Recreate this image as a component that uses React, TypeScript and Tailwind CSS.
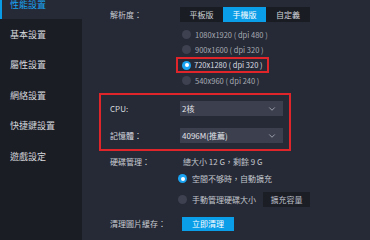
import { ChevronDown } from 'lucide-react'

const NAV = ['性能設置', '基本設置', '屬性設置', '網絡設置', '快捷鍵設置', '遊戲設定']

const RESOLUTIONS = [
  '1080x1920 ( dpi 480 )',
  '900x1600 ( dpi 320 )',
  '720x1280 ( dpi 320 )',
  '540x960 ( dpi 240 )',
]

function Radio({ on }: { on?: boolean }) {
  return on ? (
    <span className="w-[9px] h-[9px] rounded-full bg-[#1aa3f0] flex items-center justify-center shrink-0">
      <span className="w-[4px] h-[4px] rounded-full bg-white" />
    </span>
  ) : (
    <span className="w-[9px] h-[9px] rounded-full bg-[#3d4150] shrink-0" />
  )
}

function Select({ value }: { value: string }) {
  return (
    <div className="w-[103px] h-[15px] bg-[#3b3f4e] flex items-center justify-between pl-[2px] pr-[6px] text-[#e3e5ea]">
      <span>{value}</span>
      <ChevronDown size={10} strokeWidth={2} className="text-[#aeb2bc]" />
    </div>
  )
}

export default function App() {
  return (
    <div
      className="w-[370px] h-[240px] flex bg-[#262a36] text-[8px] text-[#c9ccd3] overflow-hidden"
      style={{ fontFamily: '"Noto Sans CJK TC", "Noto Sans", sans-serif' }}
    >
      <div className="w-[82px] bg-[#1b1d25] flex flex-col">
        {NAV.map((n, i) =>
          i === 0 ? (
            <div key={n} className="h-[19px] shrink-0 bg-[#262a36] border-l-2 border-[#0a9be6] pl-[8px] flex items-start text-[#1aa3f0] text-[9px]">
              <span className="leading-[10px]">{n}</span>
            </div>
          ) : (
            <div key={n} className="h-[30.5px] shrink-0 pl-[10px] flex items-center text-[9px] text-[#d7d9de]">
              {n}
            </div>
          ),
        )}
      </div>

      <div className="flex-1 pl-[28px] pt-[7px]">
        <div className="flex items-center">
          <span className="w-[70px]">解析度：</span>
          <div className="flex h-[15px]">
            <span className="w-[43px] bg-[#1a1c23] flex items-center justify-center text-[#d0d3d9]">平板版</span>
            <span className="w-[43px] bg-[#0a9de8] flex items-center justify-center text-white">手機版</span>
            <span className="w-[44px] bg-[#1a1c23] flex items-center justify-center text-[#d0d3d9]">自定義</span>
          </div>
        </div>

        <div className="ml-[67px] mt-[5px] flex flex-col items-start text-[7.5px]">
          {RESOLUTIONS.map((r, i) => (
            <div
              key={r}
              className={
                i === 2
                  ? 'h-[16px] -ml-[1px] pl-[4px] pr-[4px] flex items-center gap-[3px] border-2 border-[#e0252a] text-[#d9dce2] whitespace-nowrap'
                  : 'h-[15px] pl-[5px] flex items-center gap-[4px] text-[#a6aab4] whitespace-nowrap'
              }
            >
              <Radio on={i === 2} />
              <span>{r}</span>
            </div>
          ))}
        </div>

        <div className="-ml-[11px] mt-[5px] w-[192px] h-[58px] border-2 border-[#e0252a] pl-[9px] pt-[6px] flex flex-col gap-[12px]">
          <div className="flex items-center">
            <span className="w-[70px] text-[#d6d9df]">CPU:</span>
            <Select value="2核" />
          </div>
          <div className="flex items-center">
            <span className="w-[70px] text-[#d6d9df]">記憶體：</span>
            <Select value="4096M(推薦)" />
          </div>
        </div>

        <div className="flex items-center h-[15px] mt-[3px]">
          <span className="w-[73px]">硬碟管理：</span>
          <span className="text-[#c2c6cd]">總大小 12 G，剩餘 9 G</span>
        </div>

        <div className="ml-[68px] mt-[2px] h-[15px] flex items-center gap-[5px] text-[#c2c6cd]">
          <Radio on />
          <span>空間不够時，自動擴充</span>
        </div>

        <div className="ml-[68px] mt-[6px] h-[15px] flex items-center gap-[5px] text-[#c2c6cd]">
          <Radio />
          <span>手動管理硬碟大小</span>
          <span className="ml-[2px] w-[47px] h-[15px] bg-[#1c1e26] flex items-center justify-center text-[#b8bcc4]">擴充容量</span>
        </div>

        <div className="flex items-center mt-[10px]">
          <span className="w-[72px]">清理圖片緩存：</span>
          <span className="w-[52px] h-[14px] bg-[#0a9de8] flex items-center justify-center text-white">立即清理</span>
        </div>
      </div>
    </div>
  )
}
